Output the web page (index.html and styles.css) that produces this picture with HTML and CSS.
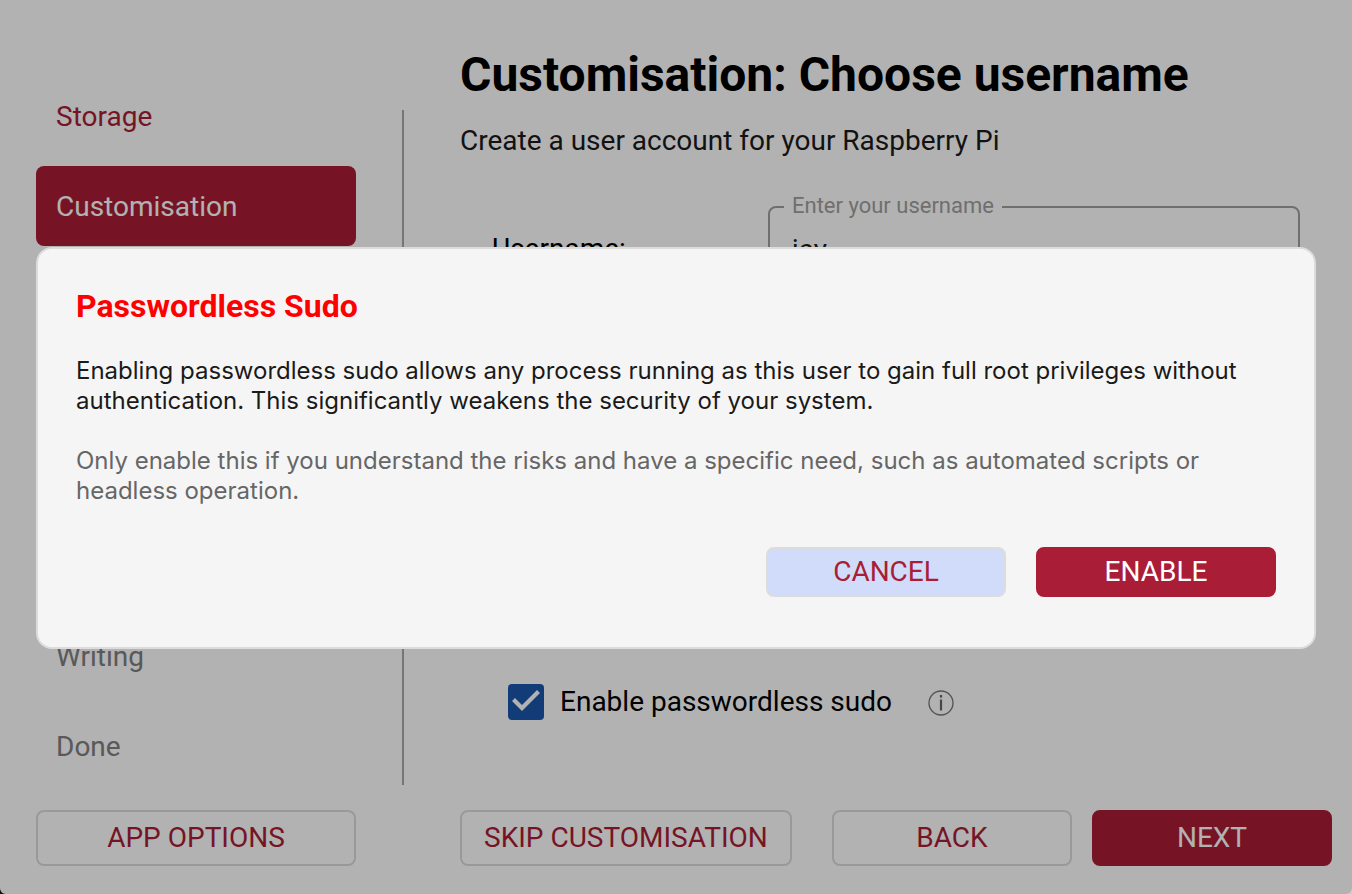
FILE: index.html
```html
<!DOCTYPE html>
<html lang="en-GB">
<head>
<meta charset="utf-8">
<meta name="viewport" content="width=device-width, initial-scale=1">
<title>Customisation: Choose username</title>
<link rel="stylesheet" href="styles.css">
</head>
<body>
<div class="window">
  <div class="app">
    <aside class="sidebar">
      <nav class="steps" aria-label="Steps">
        <div class="step-group">
          <a class="step step-done" href="#storage">Storage</a>
          <a class="step step-current" href="#customisation" aria-current="step">Customisation</a>
        </div>
        <div class="step-group">
          <a class="step" href="#writing">Writing</a>
          <a class="step" href="#done">Done</a>
        </div>
      </nav>
      <button class="button" type="button">APP OPTIONS</button>
    </aside>
    <div class="divider"></div>
    <main class="content">
      <h1 class="title">Customisation: Choose username</h1>
      <p class="subtitle">Create a user account for your Raspberry Pi</p>
      <form class="form">
        <div class="field-row">
          <label class="field-name" for="username">Username:</label>
          <fieldset class="outline">
            <legend class="outline-label">Enter your username</legend>
            <input class="outline-input" id="username" type="text" value="jay">
          </fieldset>
        </div>
        <div class="check-row">
          <input class="checkbox" id="sudo" type="checkbox" checked>
          <label class="check-label" for="sudo">Enable passwordless sudo</label>
          <button class="info" type="button" aria-label="About passwordless sudo">
            <svg width="26" height="26" viewBox="0 0 26 26" fill="none" aria-hidden="true">
              <circle cx="13" cy="13" r="12" stroke="#777" stroke-width="1.3"/>
              <path d="M13 9.5v11" stroke="#666" stroke-width="2.2"/>
              <path d="M13 5v2.6" stroke="#666" stroke-width="2.2"/>
            </svg>
          </button>
        </div>
      </form>
      <div class="actions">
        <button class="button button-skip" type="button">SKIP CUSTOMISATION</button>
        <div class="action-pair">
          <button class="button button-wide" type="button">BACK</button>
          <button class="button button-wide button-primary" type="button">NEXT</button>
        </div>
      </div>
    </main>
  </div>
  <div class="overlay">
    <section class="dialog" role="dialog" aria-modal="true" aria-labelledby="dialog-title">
      <h2 class="dialog-title" id="dialog-title">Passwordless Sudo</h2>
      <p class="dialog-text">Enabling passwordless sudo allows any process running as this user to gain full root privileges without authentication. This significantly weakens the security of your system.</p>
      <p class="dialog-text dialog-note">Only enable this if you understand the risks and have a specific need, such as automated scripts or headless operation.</p>
      <div class="dialog-actions">
        <button class="button button-small button-focused" type="button">CANCEL</button>
        <button class="button button-small button-primary" type="button">ENABLE</button>
      </div>
    </section>
  </div>
</div>
</body>
</html>
```
FILE: styles.css
```css
* {
  box-sizing: border-box;
}

html {
  background: linear-gradient(to right, #111 50%, #ccc 50%);
}

body {
  margin: 0;
  font-family: Roboto, sans-serif;
  font-size: 28px;
  line-height: 32px;
  color: #000;
}

h1, h2, p {
  margin: 0;
}

.window {
  position: relative;
  min-height: 100vh;
  display: flex;
  border-radius: 0 0 6px 6px;
  overflow: hidden;
  background: #fff;
}

.app {
  flex: 1;
  display: flex;
  padding: 0 20px 28px 36px;
}

.sidebar {
  flex: 0 0 320px;
  display: flex;
  flex-direction: column;
  gap: 24px;
  padding-top: 76px;
}

.steps {
  flex: 1;
  display: flex;
  flex-direction: column;
  justify-content: space-between;
}

.step-group {
  display: flex;
  flex-direction: column;
  gap: 10px;
}

.step {
  display: flex;
  align-items: center;
  height: 80px;
  padding: 2px 20px 0;
  border-radius: 8px;
  color: #808080;
  text-decoration: none;
}

.step-done {
  color: #aa1d36;
}

.step-current {
  background: #aa1d36;
  color: #fff;
}

.divider {
  flex: 0 0 2px;
  margin: 110px 56px 81px 46px;
  background: #aaa;
}

.content {
  flex: 1;
  min-width: 0;
  display: flex;
  flex-direction: column;
  padding-top: 47px;
}

.title {
  font-size: 48px;
  line-height: 56px;
}

.subtitle {
  margin-top: 22px;
  color: #1a1a1a;
}

.form {
  flex: 1;
  display: flex;
  flex-direction: column;
  justify-content: space-between;
  padding: 37px 32px 90px;
}

.field-row {
  display: grid;
  grid-template-columns: 276px 1fr;
  align-items: center;
}

.field-name {
  padding-top: 12px;
}

.outline {
  min-width: 0;
  margin: 0;
  padding: 14px 22px 24px;
  border: 2px solid #a0a0a0;
  border-radius: 8px;
}

.outline-label {
  margin-left: -8px;
  padding: 0 8px 2px;
  font-size: 22px;
  line-height: 24px;
  color: #a0a0a0;
}

.outline-input {
  display: block;
  width: 100%;
  padding: 0;
  border: 0;
  outline: 0;
  background: none;
  font: inherit;
  color: #1a1a1a;
}

.check-row {
  display: flex;
  align-items: center;
  padding-left: 16px;
}

.checkbox {
  appearance: none;
  width: 36px;
  height: 36px;
  margin: 0 16px 0 0;
  border-radius: 4px;
  background: #1a56ad;
}

.checkbox:not(:checked) {
  background: #fff;
}

.checkbox::after {
  content: "";
  display: block;
  height: 36px;
  background: #fff;
  clip-path: polygon(4px 17px, 7px 14px, 14px 21px, 29px 6px, 32px 9px, 14px 27px);
}

.info {
  display: flex;
  margin-left: 36px;
  padding: 2px 0 0;
  border: 0;
  background: none;
}

.actions,
.action-pair {
  display: flex;
  gap: 20px;
}

.actions {
  justify-content: space-between;
}

.button {
  height: 56px;
  padding: 0 22px;
  border: 2px solid #dcdcdc;
  border-radius: 8px;
  background: transparent;
  font: inherit;
  color: #aa1d36;
}

.button-wide,
.button-small {
  width: 240px;
}

.button-small {
  height: 50px;
}

.button-primary {
  border-color: #aa1d36;
  background: #aa1d36;
  color: #fff;
}

.button-focused {
  background: #d1dcfb;
}

.overlay {
  position: absolute;
  inset: 0;
  display: flex;
  align-items: center;
  padding: 2px 36px 0;
  background: rgba(0, 0, 0, 0.3);
}

.dialog {
  flex: 1;
  display: flex;
  flex-direction: column;
  gap: 30px;
  padding: 37px 38px 50px;
  border: 2px solid #dcdcdc;
  border-radius: 16px;
  background: #f5f5f5;
}

.dialog-title {
  font-size: 32px;
  line-height: 40px;
  color: #f00;
}

.dialog-text {
  font-family: Inter, sans-serif;
  font-size: 24px;
  font-optical-sizing: none;
  line-height: 30px;
  color: #1a1a1a;
}

.dialog-note {
  color: #666;
}

.dialog-actions {
  display: flex;
  justify-content: flex-end;
  gap: 30px;
  padding-top: 11px;
}
```
